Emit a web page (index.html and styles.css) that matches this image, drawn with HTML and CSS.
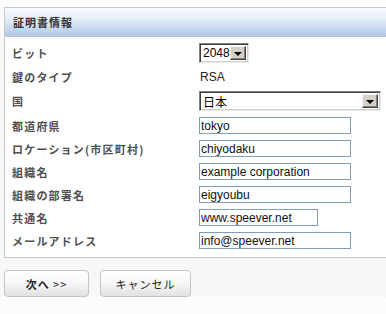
FILE: index.html
```html
<!DOCTYPE html>
<html lang="ja">
<head>
    <meta charset="UTF-8">
    <meta name="viewport" content="width=device-width, initial-scale=1.0">
    <title>証明書情報</title>
    <link rel="stylesheet" href="styles.css">
</head>
<body>
    <div class="panel">
        <div class="panel-head">証明書情報</div>
        <div class="panel-body">
            <div class="row row-bit">
                <span class="label">ビット</span>
                <div class="combo combo-small">
                    <span class="combo-value">2048</span>
                    <span class="combo-arrow"></span>
                </div>
            </div>
            <div class="row">
                <span class="label">鍵のタイプ</span>
                <span class="value">RSA</span>
            </div>
            <div class="row row-country">
                <span class="label">国</span>
                <div class="combo combo-wide">
                    <span class="combo-value">日本</span>
                    <span class="combo-arrow"></span>
                </div>
            </div>
            <div class="row">
                <label class="label" for="state">都道府県</label>
                <input type="text" id="state" value="tokyo">
            </div>
            <div class="row">
                <label class="label" for="city">ロケーション(市区町村)</label>
                <input type="text" id="city" value="chiyodaku">
            </div>
            <div class="row">
                <label class="label" for="org">組織名</label>
                <input type="text" id="org" value="example corporation">
            </div>
            <div class="row">
                <label class="label" for="unit">組織の部署名</label>
                <input type="text" id="unit" value="eigyoubu">
            </div>
            <div class="row">
                <label class="label" for="cn">共通名</label>
                <input type="text" id="cn" class="short" value="www.speever.net">
            </div>
            <div class="row">
                <label class="label" for="mail">メールアドレス</label>
                <input type="text" id="mail" value="info@speever.net">
            </div>
        </div>
    </div>

    <div class="actions">
        <button class="btn btn-next"><b>次へ</b> &gt;&gt;</button>
        <button class="btn btn-cancel">キャンセル</button>
    </div>
</body>
</html>
```

FILE: styles.css
```css
/* ページ全体 */
body {
    margin: 0;
    padding-top: 7px;
    background: linear-gradient(to bottom, #fdfdfd, #f7f7f7 60px);
    font-family: 'Liberation Sans', 'Noto Sans CJK JP', sans-serif;
    font-size: 12px;
    color: #222;
    overflow: hidden;
}
.panel {
    margin-left: 4px;
    border: 1px solid #c8c8c8;
    border-right: none;
    background: #fff;
}
.panel-head {
    height: 28px;
    line-height: 29px;
    padding-left: 8px;
    background: linear-gradient(to bottom, #f9fbfe, #e4edf8 40%, #b0c9ea);
    border-bottom: 1px solid #bcc6d2;
    font-family: 'Noto Sans CJK JP', sans-serif;
    font-size: 11px;
    font-weight: bold;
    letter-spacing: 1px;
    color: #333;
}
.panel-body {
    padding: 4px 0 5px;
}
.row {
    display: grid;
    grid-template-columns: 194px auto;
    justify-content: start;
    align-items: center;
    height: 23px;
}
.row-bit {
    height: 24px;
}
.row-country {
    height: 26px;
}
.label {
    padding-left: 7px;
    font-family: 'Noto Sans CJK JP', sans-serif;
    font-size: 11px;
    font-weight: bold;
    letter-spacing: 1.2px;
    color: #505050;
}
.value {
    padding-left: 1px;
    color: #222;
}
input {
    width: 152px;
    height: 17px;
    box-sizing: border-box;
    margin: 0;
    padding: 0 1px;
    border: 1px solid #7f9db9;
    font-family: 'Liberation Sans', sans-serif;
    font-size: 12px;
    color: #111;
    background: #fff;
}
input.short {
    width: 119px;
}

/* 旧式のコンボボックス */
.combo {
    display: flex;
    align-items: center;
    box-sizing: border-box;
    height: 20px;
    border-style: solid;
    border-width: 1px;
    border-color: #808080 #e8e8e8 #e8e8e8 #808080;
    box-shadow: inset 1px 1px 0 #404040, inset -1px -1px 0 #d4d0c8;
    background: #fff;
    padding: 2px 2px 2px 3px;
}
.combo-small {
    width: 50px;
}
.combo-wide {
    width: 182px;
}
.combo-value {
    flex: 1;
    font-size: 12px;
    color: #000;
    font-family: 'Liberation Sans', 'Noto Sans CJK JP', sans-serif;
}
.combo-arrow {
    width: 16px;
    height: 14px;
    box-sizing: border-box;
    display: flex;
    align-items: center;
    justify-content: center;
    background: #d4d0c8;
    border-style: solid;
    border-width: 1px;
    border-color: #f4f4f0 #404040 #404040 #f4f4f0;
    box-shadow: inset -1px -1px 0 #808080;
}
.combo-arrow::after {
    content: "";
    border-left: 4px solid transparent;
    border-right: 4px solid transparent;
    border-top: 4px solid #000;
    margin-top: 1px;
}

/* ボタン */
.actions {
    display: flex;
    gap: 11px;
    padding: 12px 0 0 4px;
}
.btn {
    height: 27px;
    box-sizing: border-box;
    border: 1px solid #c4c4c4;
    border-radius: 4px;
    background: linear-gradient(to bottom, #ffffff, #f6f6f6 50%, #e2e2e2);
    font-family: 'Noto Sans CJK JP', sans-serif;
    font-size: 11px;
    color: #222;
    padding: 0;
    cursor: pointer;
}
.btn-next {
    width: 85px;
    letter-spacing: 1px;
}
.btn-cancel {
    width: 91px;
    letter-spacing: 1px;
}
```
